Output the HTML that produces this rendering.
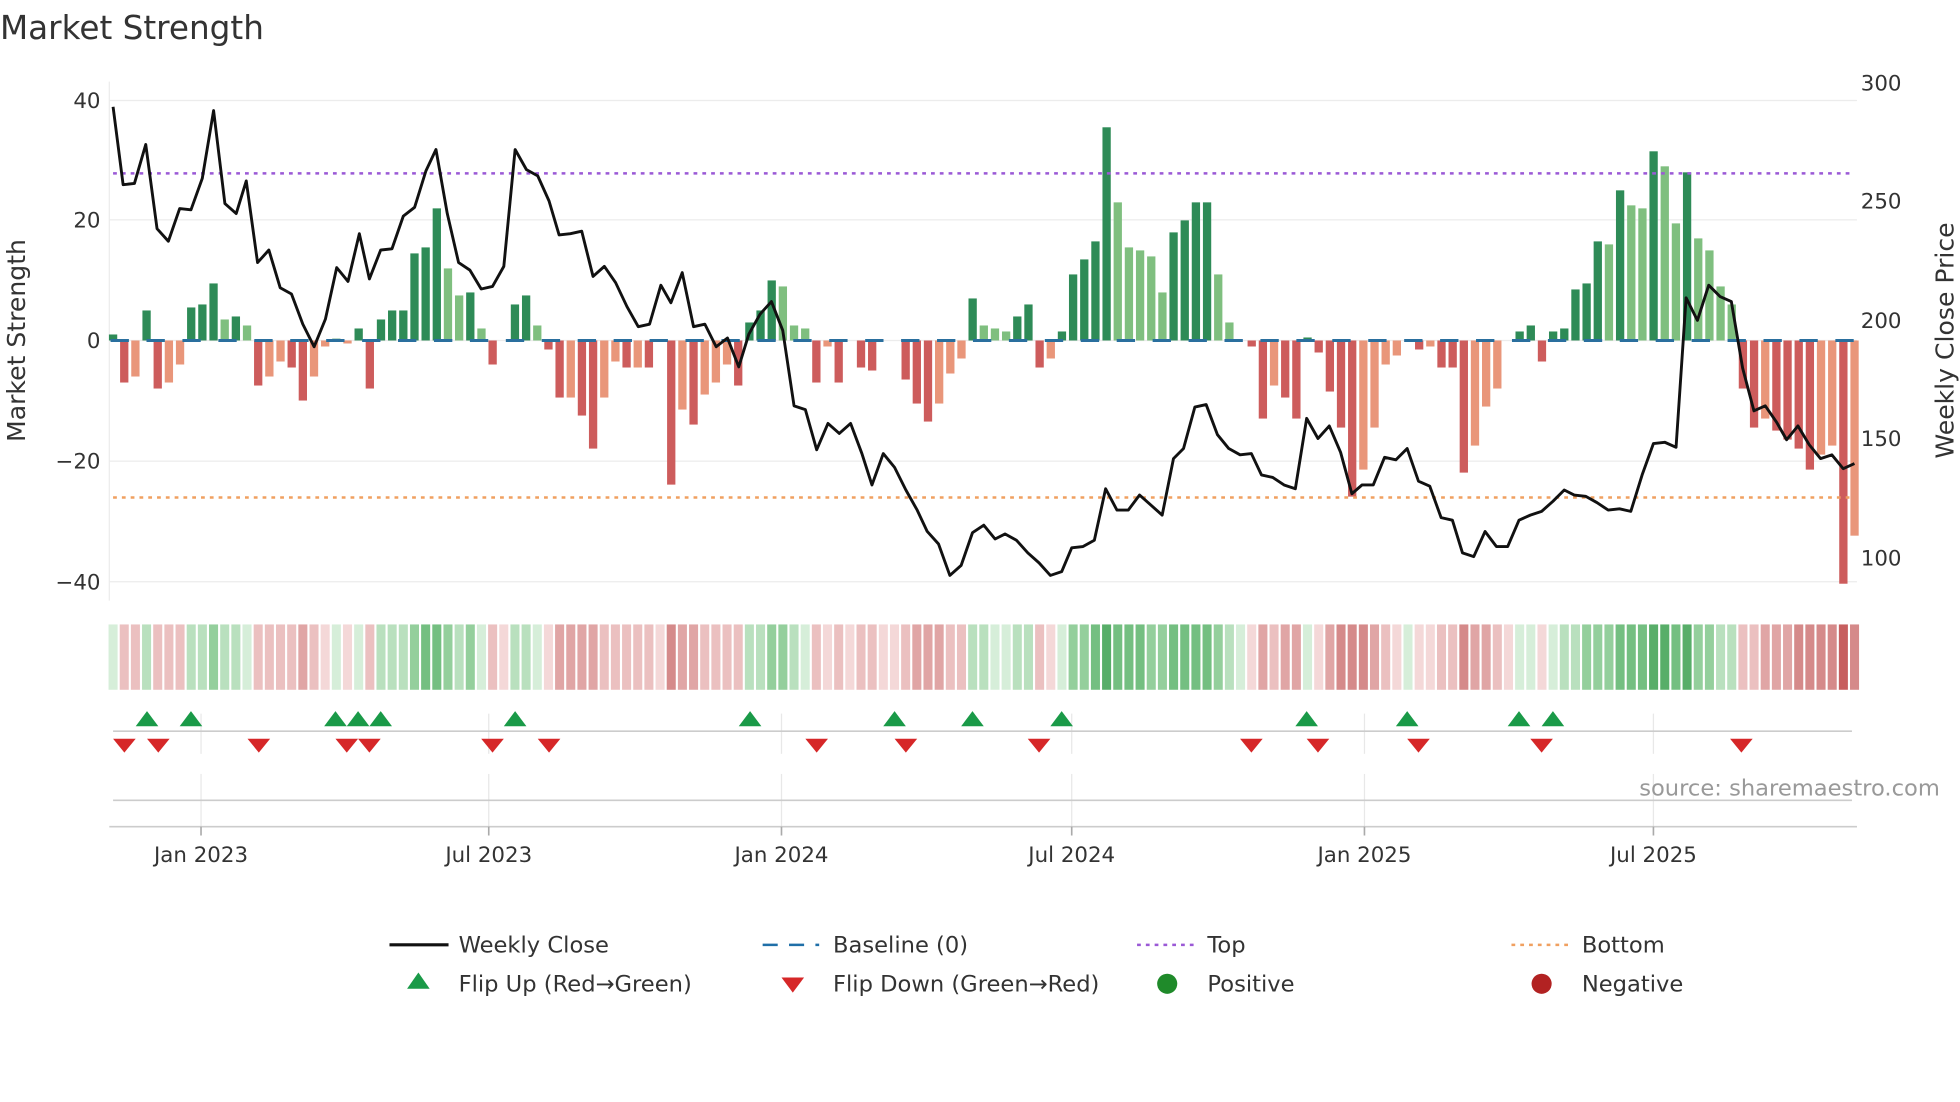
<!DOCTYPE html>
<html><head><meta charset="utf-8"><style>
html,body{margin:0;padding:0;background:#fff;}
svg{display:block;font-family:"DejaVu Sans","Liberation Sans",sans-serif;}
.D{fill:#2e8b57}.L{fill:#7fbf7f}.R{fill:#cd5c5c}.O{fill:#e9967a}
.G1{fill:#d6eed9}.G2{fill:#b9e0be}.G3{fill:#94cf9c}.G4{fill:#74bf81}.G5{fill:#58ae69}
.R1{fill:#f4d8d8}.R2{fill:#ebc0c0}.R3{fill:#e0a5a5}.R4{fill:#d58a8a}.R5{fill:#c75f5f}
</style></head><body>
<svg width="1960" height="1102" viewBox="0 0 1560 877.1" xmlns="http://www.w3.org/2000/svg">
<rect width="1560" height="878" fill="#fff"/>
<text x="0" y="31" font-size="26" fill="#333">Market Strength</text>
<g stroke="#ececec" stroke-width="1">
<line x1="87" x2="1478" y1="80" y2="80"/><line x1="87" x2="1478" y1="175" y2="175"/>
<line x1="87" x2="1478" y1="271" y2="271"/><line x1="87" x2="1478" y1="367" y2="367"/>
<line x1="87" x2="1478" y1="463" y2="463"/>
<line x1="87" x2="87" y1="65" y2="478"/>
</g>
<g font-size="17" fill="#333" text-anchor="end">
<text x="80" y="86">40</text><text x="80" y="181">20</text><text x="80" y="277">0</text>
<text x="80" y="373">−20</text><text x="80" y="469">−40</text>
</g>
<g font-size="17" fill="#333">
<text x="1481" y="72">300</text><text x="1481" y="166">250</text><text x="1481" y="261">200</text>
<text x="1481" y="355">150</text><text x="1481" y="450">100</text>
</g>
<text transform="translate(20,271) rotate(-90)" font-size="20" fill="#333" text-anchor="middle">Market Strength</text>
<text transform="translate(1555,271) rotate(-90)" font-size="20" fill="#333" text-anchor="middle">Weekly Close Price</text>

<g transform="translate(86.7,271) scale(8.885,-4.78)">
<rect x="0" y="0" width="0.743" height="1" class="D"/>
<rect x="1" y="-7" width="0.743" height="7" class="R"/>
<rect x="2" y="-6" width="0.743" height="6" class="O"/>
<rect x="3" y="0" width="0.743" height="5" class="D"/>
<rect x="4" y="-8" width="0.743" height="8" class="R"/>
<rect x="5" y="-7" width="0.743" height="7" class="O"/>
<rect x="6" y="-4" width="0.743" height="4" class="O"/>
<rect x="7" y="0" width="0.743" height="5.5" class="D"/>
<rect x="8" y="0" width="0.743" height="6" class="D"/>
<rect x="9" y="0" width="0.743" height="9.5" class="D"/>
<rect x="10" y="0" width="0.743" height="3.5" class="L"/>
<rect x="11" y="0" width="0.743" height="4" class="D"/>
<rect x="12" y="0" width="0.743" height="2.5" class="L"/>
<rect x="13" y="-7.5" width="0.743" height="7.5" class="R"/>
<rect x="14" y="-6" width="0.743" height="6" class="O"/>
<rect x="15" y="-3.5" width="0.743" height="3.5" class="O"/>
<rect x="16" y="-4.5" width="0.743" height="4.5" class="R"/>
<rect x="17" y="-10" width="0.743" height="10" class="R"/>
<rect x="18" y="-6" width="0.743" height="6" class="O"/>
<rect x="19" y="-1" width="0.743" height="1" class="O"/>
<rect x="20" y="0" width="0.743" height="0.3" class="D"/>
<rect x="21" y="-0.5" width="0.743" height="0.5" class="O"/>
<rect x="22" y="0" width="0.743" height="2" class="D"/>
<rect x="23" y="-8" width="0.743" height="8" class="R"/>
<rect x="24" y="0" width="0.743" height="3.5" class="D"/>
<rect x="25" y="0" width="0.743" height="5" class="D"/>
<rect x="26" y="0" width="0.743" height="5" class="D"/>
<rect x="27" y="0" width="0.743" height="14.5" class="D"/>
<rect x="28" y="0" width="0.743" height="15.5" class="D"/>
<rect x="29" y="0" width="0.743" height="22" class="D"/>
<rect x="30" y="0" width="0.743" height="12" class="L"/>
<rect x="31" y="0" width="0.743" height="7.5" class="L"/>
<rect x="32" y="0" width="0.743" height="8" class="D"/>
<rect x="33" y="0" width="0.743" height="2" class="L"/>
<rect x="34" y="-4" width="0.743" height="4" class="R"/>
<rect x="36" y="0" width="0.743" height="6" class="D"/>
<rect x="37" y="0" width="0.743" height="7.5" class="D"/>
<rect x="38" y="0" width="0.743" height="2.5" class="L"/>
<rect x="39" y="-1.5" width="0.743" height="1.5" class="R"/>
<rect x="40" y="-9.5" width="0.743" height="9.5" class="R"/>
<rect x="41" y="-9.5" width="0.743" height="9.5" class="O"/>
<rect x="42" y="-12.5" width="0.743" height="12.5" class="R"/>
<rect x="43" y="-18" width="0.743" height="18" class="R"/>
<rect x="44" y="-9.5" width="0.743" height="9.5" class="O"/>
<rect x="45" y="-3.5" width="0.743" height="3.5" class="O"/>
<rect x="46" y="-4.5" width="0.743" height="4.5" class="R"/>
<rect x="47" y="-4.5" width="0.743" height="4.5" class="O"/>
<rect x="48" y="-4.5" width="0.743" height="4.5" class="R"/>
<rect x="50" y="-24" width="0.743" height="24" class="R"/>
<rect x="51" y="-11.5" width="0.743" height="11.5" class="O"/>
<rect x="52" y="-14" width="0.743" height="14" class="R"/>
<rect x="53" y="-9" width="0.743" height="9" class="O"/>
<rect x="54" y="-7" width="0.743" height="7" class="O"/>
<rect x="55" y="-4" width="0.743" height="4" class="O"/>
<rect x="56" y="-7.5" width="0.743" height="7.5" class="R"/>
<rect x="57" y="0" width="0.743" height="3" class="D"/>
<rect x="58" y="0" width="0.743" height="5" class="D"/>
<rect x="59" y="0" width="0.743" height="10" class="D"/>
<rect x="60" y="0" width="0.743" height="9" class="L"/>
<rect x="61" y="0" width="0.743" height="2.5" class="L"/>
<rect x="62" y="0" width="0.743" height="2" class="L"/>
<rect x="63" y="-7" width="0.743" height="7" class="R"/>
<rect x="64" y="-1" width="0.743" height="1" class="O"/>
<rect x="65" y="-7" width="0.743" height="7" class="R"/>
<rect x="67" y="-4.5" width="0.743" height="4.5" class="R"/>
<rect x="68" y="-5" width="0.743" height="5" class="R"/>
<rect x="71" y="-6.5" width="0.743" height="6.5" class="R"/>
<rect x="72" y="-10.5" width="0.743" height="10.5" class="R"/>
<rect x="73" y="-13.5" width="0.743" height="13.5" class="R"/>
<rect x="74" y="-10.5" width="0.743" height="10.5" class="O"/>
<rect x="75" y="-5.5" width="0.743" height="5.5" class="O"/>
<rect x="76" y="-3" width="0.743" height="3" class="O"/>
<rect x="77" y="0" width="0.743" height="7" class="D"/>
<rect x="78" y="0" width="0.743" height="2.5" class="L"/>
<rect x="79" y="0" width="0.743" height="2" class="L"/>
<rect x="80" y="0" width="0.743" height="1.5" class="L"/>
<rect x="81" y="0" width="0.743" height="4" class="D"/>
<rect x="82" y="0" width="0.743" height="6" class="D"/>
<rect x="83" y="-4.5" width="0.743" height="4.5" class="R"/>
<rect x="84" y="-3" width="0.743" height="3" class="O"/>
<rect x="85" y="0" width="0.743" height="1.5" class="D"/>
<rect x="86" y="0" width="0.743" height="11" class="D"/>
<rect x="87" y="0" width="0.743" height="13.5" class="D"/>
<rect x="88" y="0" width="0.743" height="16.5" class="D"/>
<rect x="89" y="0" width="0.743" height="35.5" class="D"/>
<rect x="90" y="0" width="0.743" height="23" class="L"/>
<rect x="91" y="0" width="0.743" height="15.5" class="L"/>
<rect x="92" y="0" width="0.743" height="15" class="L"/>
<rect x="93" y="0" width="0.743" height="14" class="L"/>
<rect x="94" y="0" width="0.743" height="8" class="L"/>
<rect x="95" y="0" width="0.743" height="18" class="D"/>
<rect x="96" y="0" width="0.743" height="20" class="D"/>
<rect x="97" y="0" width="0.743" height="23" class="D"/>
<rect x="98" y="0" width="0.743" height="23" class="D"/>
<rect x="99" y="0" width="0.743" height="11" class="L"/>
<rect x="100" y="0" width="0.743" height="3" class="L"/>
<rect x="102" y="-1" width="0.743" height="1" class="R"/>
<rect x="103" y="-13" width="0.743" height="13" class="R"/>
<rect x="104" y="-7.5" width="0.743" height="7.5" class="O"/>
<rect x="105" y="-9.5" width="0.743" height="9.5" class="R"/>
<rect x="106" y="-13" width="0.743" height="13" class="R"/>
<rect x="107" y="0" width="0.743" height="0.5" class="D"/>
<rect x="108" y="-2" width="0.743" height="2" class="R"/>
<rect x="109" y="-8.5" width="0.743" height="8.5" class="R"/>
<rect x="110" y="-14.5" width="0.743" height="14.5" class="R"/>
<rect x="111" y="-26" width="0.743" height="26" class="R"/>
<rect x="112" y="-21.5" width="0.743" height="21.5" class="O"/>
<rect x="113" y="-14.5" width="0.743" height="14.5" class="O"/>
<rect x="114" y="-4" width="0.743" height="4" class="O"/>
<rect x="115" y="-2.5" width="0.743" height="2.5" class="O"/>
<rect x="117" y="-1.5" width="0.743" height="1.5" class="R"/>
<rect x="118" y="-1" width="0.743" height="1" class="O"/>
<rect x="119" y="-4.5" width="0.743" height="4.5" class="R"/>
<rect x="120" y="-4.5" width="0.743" height="4.5" class="R"/>
<rect x="121" y="-22" width="0.743" height="22" class="R"/>
<rect x="122" y="-17.5" width="0.743" height="17.5" class="O"/>
<rect x="123" y="-11" width="0.743" height="11" class="O"/>
<rect x="124" y="-8" width="0.743" height="8" class="O"/>
<rect x="126" y="0" width="0.743" height="1.5" class="D"/>
<rect x="127" y="0" width="0.743" height="2.5" class="D"/>
<rect x="128" y="-3.5" width="0.743" height="3.5" class="R"/>
<rect x="129" y="0" width="0.743" height="1.5" class="D"/>
<rect x="130" y="0" width="0.743" height="2" class="D"/>
<rect x="131" y="0" width="0.743" height="8.5" class="D"/>
<rect x="132" y="0" width="0.743" height="9.5" class="D"/>
<rect x="133" y="0" width="0.743" height="16.5" class="D"/>
<rect x="134" y="0" width="0.743" height="16" class="L"/>
<rect x="135" y="0" width="0.743" height="25" class="D"/>
<rect x="136" y="0" width="0.743" height="22.5" class="L"/>
<rect x="137" y="0" width="0.743" height="22" class="L"/>
<rect x="138" y="0" width="0.743" height="31.5" class="D"/>
<rect x="139" y="0" width="0.743" height="29" class="L"/>
<rect x="140" y="0" width="0.743" height="19.5" class="L"/>
<rect x="141" y="0" width="0.743" height="28" class="D"/>
<rect x="142" y="0" width="0.743" height="17" class="L"/>
<rect x="143" y="0" width="0.743" height="15" class="L"/>
<rect x="144" y="0" width="0.743" height="9" class="L"/>
<rect x="145" y="0" width="0.743" height="6" class="L"/>
<rect x="146" y="-8" width="0.743" height="8" class="R"/>
<rect x="147" y="-14.5" width="0.743" height="14.5" class="R"/>
<rect x="148" y="-13" width="0.743" height="13" class="O"/>
<rect x="149" y="-15" width="0.743" height="15" class="R"/>
<rect x="150" y="-16.5" width="0.743" height="16.5" class="R"/>
<rect x="151" y="-18" width="0.743" height="18" class="R"/>
<rect x="152" y="-21.5" width="0.743" height="21.5" class="R"/>
<rect x="153" y="-19" width="0.743" height="19" class="O"/>
<rect x="154" y="-17.5" width="0.743" height="17.5" class="O"/>
<rect x="155" y="-40.5" width="0.743" height="40.5" class="R"/>
<rect x="156" y="-32.5" width="0.743" height="32.5" class="O"/>
</g>
<line x1="88" x2="1476" y1="271" y2="271" stroke="#2a6f9e" stroke-width="2.4" stroke-dasharray="14.6,14"/>

<line x1="90" x2="1476" y1="138" y2="138" stroke="#9b59d6" stroke-width="2" stroke-dasharray="3,4"/>
<line x1="90" x2="1476" y1="396" y2="396" stroke="#f0a060" stroke-width="2" stroke-dasharray="3,4"/>
<polyline fill="none" stroke="#111" stroke-width="2.3" stroke-linejoin="round" points="90,85 98,147 107,146 116,115 125,182 134,192 143,166 152,167 161,142 170,88 179,162 188,170 196,144 205,209 214,199 223,229 232,234 241,258 250,276 259,254 268,213 277,224 286,186 294,222 303,199 312,198 321,172 330,165 339,136 347,119 356,170 365,209 374,215 383,230 392,228 401,212 410,119 419,135 428,140 437,160 445,187 454,186 463,184 472,220 481,212 490,225 499,244 508,260 517,258 526,227 534,241 543,217 552,260 561,258 570,276 579,269 588,292 596,266 605,250 614,240 623,263 632,323 641,326 650,358 659,337 668,345 677,337 686,361 694,386 703,361 712,372 721,390 730,406 738,423 747,433 756,458 765,450 774,424 783,418 792,429 800,425 809,430 818,440 827,448 836,458 845,455 853,436 862,435 871,430 880,389 889,406 898,406 907,394 916,402 925,410 934,365 942,357 951,324 960,322 969,346 978,357 987,362 996,361 1004,378 1013,380 1022,386 1031,389 1040,333 1049,349 1058,339 1067,360 1076,393 1084,386 1093,386 1102,364 1111,366 1120,357 1129,383 1138,387 1147,412 1156,414 1164,440 1173,443 1182,423 1191,435 1200,435 1209,414 1218,410 1227,407 1236,399 1245,390 1253,394 1262,395 1271,400 1280,406 1289,405 1298,407 1307,378 1316,353 1325,352 1334,356 1342,237 1351,255 1360,227 1369,236 1378,240 1387,293 1396,327 1405,323 1414,336 1422,350 1431,339 1440,354 1449,365 1458,362 1467,373 1476,369"/>

<g transform="translate(86.4,497) scale(8.885,1)">
<rect x="0" width="0.81" height="52" class="G1"/><rect x="1" width="0.81" height="52" class="R2"/><rect x="2" width="0.81" height="52" class="R2"/><rect x="3" width="0.81" height="52" class="G2"/><rect x="4" width="0.81" height="52" class="R2"/><rect x="5" width="0.81" height="52" class="R2"/><rect x="6" width="0.81" height="52" class="R2"/><rect x="7" width="0.81" height="52" class="G2"/><rect x="8" width="0.81" height="52" class="G2"/><rect x="9" width="0.81" height="52" class="G3"/>
<rect x="10" width="0.81" height="52" class="G2"/><rect x="11" width="0.81" height="52" class="G2"/><rect x="12" width="0.81" height="52" class="G1"/><rect x="13" width="0.81" height="52" class="R2"/><rect x="14" width="0.81" height="52" class="R2"/><rect x="15" width="0.81" height="52" class="R2"/><rect x="16" width="0.81" height="52" class="R2"/><rect x="17" width="0.81" height="52" class="R3"/><rect x="18" width="0.81" height="52" class="R2"/><rect x="19" width="0.81" height="52" class="R1"/>
<rect x="20" width="0.81" height="52" class="G1"/><rect x="21" width="0.81" height="52" class="R1"/><rect x="22" width="0.81" height="52" class="G1"/><rect x="23" width="0.81" height="52" class="R2"/><rect x="24" width="0.81" height="52" class="G2"/><rect x="25" width="0.81" height="52" class="G2"/><rect x="26" width="0.81" height="52" class="G2"/><rect x="27" width="0.81" height="52" class="G3"/><rect x="28" width="0.81" height="52" class="G4"/><rect x="29" width="0.81" height="52" class="G4"/>
<rect x="30" width="0.81" height="52" class="G3"/><rect x="31" width="0.81" height="52" class="G2"/><rect x="32" width="0.81" height="52" class="G3"/><rect x="33" width="0.81" height="52" class="G1"/><rect x="34" width="0.81" height="52" class="R2"/><rect x="35" width="0.81" height="52" class="R1"/><rect x="36" width="0.81" height="52" class="G2"/><rect x="37" width="0.81" height="52" class="G2"/><rect x="38" width="0.81" height="52" class="G1"/><rect x="39" width="0.81" height="52" class="R1"/>
<rect x="40" width="0.81" height="52" class="R3"/><rect x="41" width="0.81" height="52" class="R3"/><rect x="42" width="0.81" height="52" class="R3"/><rect x="43" width="0.81" height="52" class="R3"/><rect x="44" width="0.81" height="52" class="R2"/><rect x="45" width="0.81" height="52" class="R2"/><rect x="46" width="0.81" height="52" class="R2"/><rect x="47" width="0.81" height="52" class="R2"/><rect x="48" width="0.81" height="52" class="R2"/><rect x="49" width="0.81" height="52" class="R1"/>
<rect x="50" width="0.81" height="52" class="R4"/><rect x="51" width="0.81" height="52" class="R3"/><rect x="52" width="0.81" height="52" class="R3"/><rect x="53" width="0.81" height="52" class="R2"/><rect x="54" width="0.81" height="52" class="R2"/><rect x="55" width="0.81" height="52" class="R2"/><rect x="56" width="0.81" height="52" class="R2"/><rect x="57" width="0.81" height="52" class="G2"/><rect x="58" width="0.81" height="52" class="G2"/><rect x="59" width="0.81" height="52" class="G3"/>
<rect x="60" width="0.81" height="52" class="G3"/><rect x="61" width="0.81" height="52" class="G2"/><rect x="62" width="0.81" height="52" class="G1"/><rect x="63" width="0.81" height="52" class="R2"/><rect x="64" width="0.81" height="52" class="R1"/><rect x="65" width="0.81" height="52" class="R2"/><rect x="66" width="0.81" height="52" class="R1"/><rect x="67" width="0.81" height="52" class="R2"/><rect x="68" width="0.81" height="52" class="R2"/><rect x="69" width="0.81" height="52" class="R1"/>
<rect x="70" width="0.81" height="52" class="R1"/><rect x="71" width="0.81" height="52" class="R2"/><rect x="72" width="0.81" height="52" class="R3"/><rect x="73" width="0.81" height="52" class="R3"/><rect x="74" width="0.81" height="52" class="R3"/><rect x="75" width="0.81" height="52" class="R2"/><rect x="76" width="0.81" height="52" class="R2"/><rect x="77" width="0.81" height="52" class="G2"/><rect x="78" width="0.81" height="52" class="G2"/><rect x="79" width="0.81" height="52" class="G1"/>
<rect x="80" width="0.81" height="52" class="G1"/><rect x="81" width="0.81" height="52" class="G2"/><rect x="82" width="0.81" height="52" class="G2"/><rect x="83" width="0.81" height="52" class="R2"/><rect x="84" width="0.81" height="52" class="R1"/><rect x="85" width="0.81" height="52" class="G1"/><rect x="86" width="0.81" height="52" class="G3"/><rect x="87" width="0.81" height="52" class="G3"/><rect x="88" width="0.81" height="52" class="G4"/><rect x="89" width="0.81" height="52" class="G5"/>
<rect x="90" width="0.81" height="52" class="G4"/><rect x="91" width="0.81" height="52" class="G4"/><rect x="92" width="0.81" height="52" class="G4"/><rect x="93" width="0.81" height="52" class="G3"/><rect x="94" width="0.81" height="52" class="G3"/><rect x="95" width="0.81" height="52" class="G4"/><rect x="96" width="0.81" height="52" class="G4"/><rect x="97" width="0.81" height="52" class="G4"/><rect x="98" width="0.81" height="52" class="G4"/><rect x="99" width="0.81" height="52" class="G3"/>
<rect x="100" width="0.81" height="52" class="G2"/><rect x="101" width="0.81" height="52" class="G1"/><rect x="102" width="0.81" height="52" class="R1"/><rect x="103" width="0.81" height="52" class="R3"/><rect x="104" width="0.81" height="52" class="R2"/><rect x="105" width="0.81" height="52" class="R3"/><rect x="106" width="0.81" height="52" class="R3"/><rect x="107" width="0.81" height="52" class="G1"/><rect x="108" width="0.81" height="52" class="R1"/><rect x="109" width="0.81" height="52" class="R3"/>
<rect x="110" width="0.81" height="52" class="R4"/><rect x="111" width="0.81" height="52" class="R4"/><rect x="112" width="0.81" height="52" class="R4"/><rect x="113" width="0.81" height="52" class="R3"/><rect x="114" width="0.81" height="52" class="R2"/><rect x="115" width="0.81" height="52" class="R1"/><rect x="116" width="0.81" height="52" class="G1"/><rect x="117" width="0.81" height="52" class="R1"/><rect x="118" width="0.81" height="52" class="R1"/><rect x="119" width="0.81" height="52" class="R2"/>
<rect x="120" width="0.81" height="52" class="R2"/><rect x="121" width="0.81" height="52" class="R4"/><rect x="122" width="0.81" height="52" class="R3"/><rect x="123" width="0.81" height="52" class="R3"/><rect x="124" width="0.81" height="52" class="R2"/><rect x="125" width="0.81" height="52" class="R1"/><rect x="126" width="0.81" height="52" class="G1"/><rect x="127" width="0.81" height="52" class="G1"/><rect x="128" width="0.81" height="52" class="R1"/><rect x="129" width="0.81" height="52" class="G1"/>
<rect x="130" width="0.81" height="52" class="G2"/><rect x="131" width="0.81" height="52" class="G2"/><rect x="132" width="0.81" height="52" class="G3"/><rect x="133" width="0.81" height="52" class="G3"/><rect x="134" width="0.81" height="52" class="G3"/><rect x="135" width="0.81" height="52" class="G4"/><rect x="136" width="0.81" height="52" class="G4"/><rect x="137" width="0.81" height="52" class="G4"/><rect x="138" width="0.81" height="52" class="G5"/><rect x="139" width="0.81" height="52" class="G5"/>
<rect x="140" width="0.81" height="52" class="G4"/><rect x="141" width="0.81" height="52" class="G5"/><rect x="142" width="0.81" height="52" class="G3"/><rect x="143" width="0.81" height="52" class="G3"/><rect x="144" width="0.81" height="52" class="G2"/><rect x="145" width="0.81" height="52" class="G2"/><rect x="146" width="0.81" height="52" class="R2"/><rect x="147" width="0.81" height="52" class="R2"/><rect x="148" width="0.81" height="52" class="R3"/><rect x="149" width="0.81" height="52" class="R3"/>
<rect x="150" width="0.81" height="52" class="R3"/><rect x="151" width="0.81" height="52" class="R4"/><rect x="152" width="0.81" height="52" class="R4"/><rect x="153" width="0.81" height="52" class="R4"/><rect x="154" width="0.81" height="52" class="R4"/><rect x="155" width="0.81" height="52" class="R5"/><rect x="156" width="0.81" height="52" class="R4"/>
</g>

<g stroke="#e8e8e8" stroke-width="1">
<line x1="160" x2="160" y1="568" y2="600"/><line x1="389" x2="389" y1="568" y2="600"/>
<line x1="622" x2="622" y1="568" y2="600"/><line x1="853" x2="853" y1="568" y2="600"/>
<line x1="1086" x2="1086" y1="568" y2="600"/><line x1="1316" x2="1316" y1="568" y2="600"/>
<line x1="160" x2="160" y1="616" y2="658"/><line x1="389" x2="389" y1="616" y2="658"/>
<line x1="622" x2="622" y1="616" y2="658"/><line x1="853" x2="853" y1="616" y2="658"/>
<line x1="1086" x2="1086" y1="616" y2="658"/><line x1="1316" x2="1316" y1="616" y2="658"/>
</g>
<line x1="90" x2="1474" y1="582" y2="582" stroke="#ccc" stroke-width="1.3"/>
<line x1="90" x2="1474" y1="637" y2="637" stroke="#ccc" stroke-width="1.3"/>
<line x1="87" x2="1478" y1="658" y2="658" stroke="#ccc" stroke-width="1.3"/>
<g stroke="#aaa" stroke-width="1.3">
<line x1="160" x2="160" y1="658" y2="665"/><line x1="389" x2="389" y1="658" y2="665"/>
<line x1="622" x2="622" y1="658" y2="665"/><line x1="853" x2="853" y1="658" y2="665"/>
<line x1="1086" x2="1086" y1="658" y2="665"/><line x1="1316" x2="1316" y1="658" y2="665"/>
</g>
<g fill="#1a9a48">
<polygon points="108,578 126,578 117,566"/><polygon points="143,578 161,578 152,566"/>
<polygon points="258,578 276,578 267,566"/><polygon points="276,578 294,578 285,566"/>
<polygon points="294,578 312,578 303,566"/><polygon points="401,578 419,578 410,566"/>
<polygon points="588,578 606,578 597,566"/><polygon points="703,578 721,578 712,566"/>
<polygon points="765,578 783,578 774,566"/><polygon points="836,578 854,578 845,566"/>
<polygon points="1031,578 1049,578 1040,566"/><polygon points="1111,578 1129,578 1120,566"/>
<polygon points="1200,578 1218,578 1209,566"/><polygon points="1227,578 1245,578 1236,566"/>
</g>
<g fill="#d62728">
<polygon points="90,588 108,588 99,599"/><polygon points="117,588 135,588 126,599"/>
<polygon points="197,588 215,588 206,599"/><polygon points="267,588 285,588 276,599"/>
<polygon points="285,588 303,588 294,599"/><polygon points="383,588 401,588 392,599"/>
<polygon points="428,588 446,588 437,599"/><polygon points="641,588 659,588 650,599"/>
<polygon points="712,588 730,588 721,599"/><polygon points="818,588 836,588 827,599"/>
<polygon points="987,588 1005,588 996,599"/><polygon points="1040,588 1058,588 1049,599"/>
<polygon points="1120,588 1138,588 1129,599"/><polygon points="1218,588 1236,588 1227,599"/>
<polygon points="1377,588 1395,588 1386,599"/>
</g>
<text x="1544" y="633" font-size="18" fill="#999" text-anchor="end">source: sharemaestro.com</text>
<g font-size="17" fill="#333" text-anchor="middle">
<text x="160" y="686">Jan 2023</text><text x="389" y="686">Jul 2023</text><text x="622" y="686">Jan 2024</text>
<text x="853" y="686">Jul 2024</text><text x="1086" y="686">Jan 2025</text><text x="1316" y="686">Jul 2025</text>
</g>
<g font-size="18" fill="#333">
<line x1="310" x2="357" y1="752" y2="752" stroke="#111" stroke-width="2.5"/>
<text x="365" y="758">Weekly Close</text>
<line x1="607" x2="652" y1="752" y2="752" stroke="#1f6fa8" stroke-width="2" stroke-dasharray="12,9"/>
<text x="663" y="758">Baseline (0)</text>
<line x1="905" x2="950" y1="752" y2="752" stroke="#9b59d6" stroke-width="2" stroke-dasharray="3,4"/>
<text x="961" y="758">Top</text>
<line x1="1203" x2="1248" y1="752" y2="752" stroke="#f0a060" stroke-width="2" stroke-dasharray="3,4"/>
<text x="1259" y="758">Bottom</text>
<polygon points="324,787 342,787 333,774" fill="#1a9a48"/>
<text x="365" y="789">Flip Up (Red→Green)</text>
<polygon points="622,778 640,778 631,790" fill="#d62728"/>
<text x="663" y="789">Flip Down (Green→Red)</text>
<circle cx="929" cy="783" r="8" fill="#1f8a2a"/>
<text x="961" y="789">Positive</text>
<circle cx="1227" cy="783" r="8" fill="#b22222"/>
<text x="1259" y="789">Negative</text>
</g>
</svg>
</body></html>
